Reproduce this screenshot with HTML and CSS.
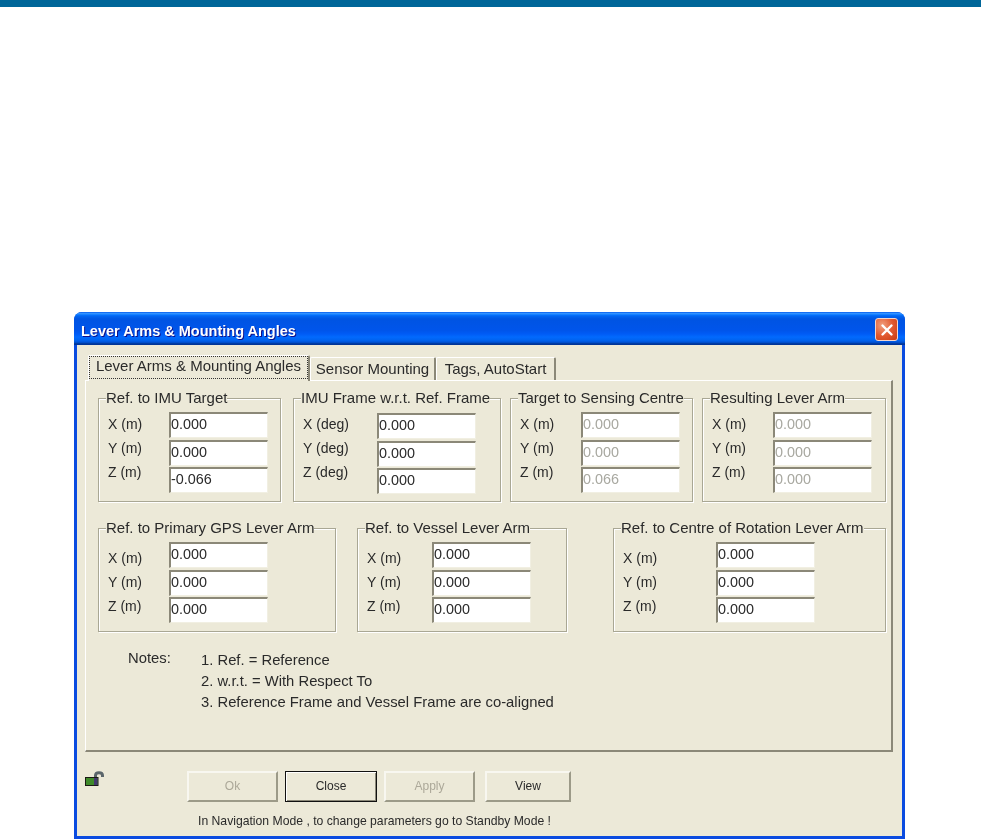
FILE: index.html
```html
<!DOCTYPE html>
<html lang="en">
<head>
<meta charset="utf-8">
<title>Lever Arms &amp; Mounting Angles</title>
<link rel="stylesheet" href="styles.css">
</head>
<body>
<div class="topbar"></div>
<div class="window">
  <div class="titlebar">
    <span class="title">Lever Arms &amp; Mounting Angles</span>
    <div class="close-x"><svg width="14" height="14" viewBox="0 0 14 14"><path d="M2.5 2.5 L11.5 11.5 M11.5 2.5 L2.5 11.5" stroke="#fff" stroke-width="2.4" stroke-linecap="round"/></svg></div>
  </div>
  <div class="client">
    <div class="tabs">
      <div class="tab active"><span class="focus">Lever Arms &amp; Mounting Angles</span></div>
      <div class="tab t2">Sensor Mounting</div>
      <div class="tab t3">Tags, AutoStart</div>
    </div>
    <div class="panel">
      <div class="row row1">
        <fieldset class="group g1">
          <legend>Ref. to IMU Target</legend>
          <div class="labels l61"><div>X (m)</div><div>Y (m)</div><div>Z (m)</div></div>
          <div class="fields"><div class="field">0.000</div><div class="field">0.000</div><div class="field">-0.066</div></div>
        </fieldset>
        <fieldset class="group g2">
          <legend>IMU Frame w.r.t. Ref. Frame</legend>
          <div class="labels l74"><div>X (deg)</div><div>Y (deg)</div><div>Z (deg)</div></div>
          <div class="fields low"><div class="field">0.000</div><div class="field">0.000</div><div class="field">0.000</div></div>
        </fieldset>
        <fieldset class="group g3">
          <legend>Target to Sensing Centre</legend>
          <div class="labels l61"><div>X (m)</div><div>Y (m)</div><div>Z (m)</div></div>
          <div class="fields off"><div class="field">0.000</div><div class="field">0.000</div><div class="field">0.066</div></div>
        </fieldset>
        <fieldset class="group g4">
          <legend>Resulting Lever Arm</legend>
          <div class="labels l61"><div>X (m)</div><div>Y (m)</div><div>Z (m)</div></div>
          <div class="fields off"><div class="field">0.000</div><div class="field">0.000</div><div class="field">0.000</div></div>
        </fieldset>
      </div>
      <div class="row row2">
        <fieldset class="group g5">
          <legend>Ref. to Primary GPS Lever Arm</legend>
          <div class="labels l61 drop"><div>X (m)</div><div>Y (m)</div><div>Z (m)</div></div>
          <div class="fields"><div class="field">0.000</div><div class="field">0.000</div><div class="field">0.000</div></div>
        </fieldset>
        <fieldset class="group g6">
          <legend>Ref. to Vessel Lever Arm</legend>
          <div class="labels l65 drop"><div>X (m)</div><div>Y (m)</div><div>Z (m)</div></div>
          <div class="fields"><div class="field">0.000</div><div class="field">0.000</div><div class="field">0.000</div></div>
        </fieldset>
        <fieldset class="group g7">
          <legend>Ref. to Centre of Rotation Lever Arm</legend>
          <div class="labels l93 drop"><div>X (m)</div><div>Y (m)</div><div>Z (m)</div></div>
          <div class="fields"><div class="field">0.000</div><div class="field">0.000</div><div class="field">0.000</div></div>
        </fieldset>
      </div>
      <div class="notes">
        <div class="notes-head">Notes:</div>
        <div class="notes-list">
          <div>1. Ref. = Reference</div>
          <div>2. w.r.t. = With Respect To</div>
          <div>3. Reference Frame and Vessel Frame are co-aligned</div>
        </div>
      </div>
    </div>
    <div class="footer">
      <div class="lock">
        <svg width="20" height="16" viewBox="0 0 20 16">
          <path d="M10.5 7 V4.5 C10.5 0.8 17.5 0.8 17.5 4.5 V6" fill="none" stroke="#5b666b" stroke-width="3"/>
          <rect x="0.5" y="6.5" width="12.5" height="8" fill="#3f8a2a" stroke="#1a1a14"/>
          <rect x="9" y="7" width="3.5" height="7" fill="#43386e"/>
        </svg>
      </div>
      <div class="actions">
        <div class="buttons">
          <div class="btn dis b1">Ok</div>
          <div class="btn def b2">Close</div>
          <div class="btn dis b3">Apply</div>
          <div class="btn b4">View</div>
        </div>
        <div class="status">In Navigation Mode , to change parameters go to Standby Mode !</div>
      </div>
    </div>
  </div>
</div>
</body>
</html>
```
FILE: styles.css
```css
html, body { margin: 0; padding: 0; background: #fff; }
body { height: 840px; overflow: hidden; font-family: "Liberation Sans", Arial, sans-serif; font-size: 14px; color: #2a2a2a; }
.topbar { height: 7px; background: #006699; }
.window {
  margin: 305px 0 0 74px; width: 831px; height: 527px; box-sizing: border-box;
  display: flex; flex-direction: column;
  background: #0a4be0; border-radius: 8px 8px 0 0; filter: blur(0.45px);
}
.titlebar {
  height: 33px; flex: none; display: flex; align-items: center; justify-content: space-between;
  box-sizing: border-box; padding: 2px 7px 0 7px; border-radius: 8px 8px 0 0;
  background: linear-gradient(180deg, #0058ee 0%, #3593ff 4%, #288eff 6%, #127dff 8%, #036ffc 10%, #0262ee 14%, #0057e5 20%, #0054e3 24%, #0055eb 56%, #005bf5 66%, #026afe 76%, #0062ef 86%, #0052d6 92%, #0040ab 94%, #003092 100%);
}
.title { color: #fff; font-weight: bold; font-size: 14.5px; padding-top: 2px; text-shadow: 1px 1px 0 #0f1089; }
.close-x {
  width: 21px; height: 21px; display: flex; align-items: center; justify-content: center;
  border: 1px solid #f4d5cb; border-radius: 3px;
  background: radial-gradient(circle at 30% 30%, #f0a080 0%, #e25a30 50%, #c93a10 100%);
}
.client {
  flex: 1; margin: 0 3px 3px 3px; background: #ece9d8; display: flex; flex-direction: column;
}
.tabs { height: 35px; box-sizing: border-box; padding: 10px 0 0 11px; display: flex; align-items: flex-end; position: relative; z-index: 1; font-size: 15px; }
.tab {
  box-sizing: border-box; height: 23px; line-height: 21px; text-align: center;
  border-top: 1px solid #fff; border-left: 1px solid #fff; border-right: 2px solid #8b8878;
  background: #ece9d8; border-radius: 2px 2px 0 0;
}
.tab.active { width: 222px; height: 26px; margin-bottom: -1px; padding: 0; }
.focus { display: block; height: 23px; line-height: 20px; outline: 1px dotted #333; outline-offset: -1px; }
.t2 { width: 126px; }
.t3 { width: 120px; }
.panel {
  box-sizing: border-box; width: 808px; height: 372px; margin-left: 8px; padding: 9px 0 0 12px;
  border-top: 1px solid #fff; border-left: 1px solid #fff;
  border-right: 2px solid #8b8878; border-bottom: 2px solid #8b8878;
}
.row { display: flex; }
.row1 { height: 112px; }
.row2 { margin-top: 18px; height: 112px; }
.group {
  box-sizing: border-box; height: 100%; margin: 0; padding: 6px 0 0 0; min-width: 0;
  display: flex; border: 1px solid #a9a794; box-shadow: 1px 1px 0 #fff, inset 1px 1px 0 #fff; border-radius: 0;
}
.group legend { padding: 0; margin-left: 7px; line-height: 16px; height: 16px; font-size: 15px; background: #ece9d8; }
.g1 { width: 183px; }
.g2 { width: 208px; margin-left: 12px; }
.g3 { width: 183px; margin-left: 9px; }
.g4 { width: 184px; margin-left: 9px; }
.g5 { width: 238px; }
.g6 { width: 210px; margin-left: 21px; }
.g7 { width: 273px; margin-left: 46px; }
.labels { flex: none; padding-left: 9px; box-sizing: content-box; }
.labels div { height: 24px; line-height: 24px; }
.drop { padding-top: 4px; }
.l61 { width: 61px; }
.l65 { width: 65px; }
.l74 { width: 74px; }
.l93 { width: 93px; }
.fields { width: 99px; flex: none; display: flex; flex-direction: column; gap: 1.5px; }
.fields.low { padding-top: 1px; }
.field {
  box-sizing: border-box; height: 26px; line-height: 20px; padding: 0; font-size: 14.4px;
  background: #fff; border-top: 2px solid #8b8878; border-left: 2px solid #8b8878;
  border-right: 1px solid #f1efe2; border-bottom: 1px solid #f1efe2;
}
.off .field { color: #a8a8a0; }
.notes { display: flex; margin-top: 18px; font-size: 14.8px; }
.notes-head { margin-left: 30px; flex: none; width: 73px; line-height: 21px; margin-top: -2px; }
.notes-list div { height: 21px; line-height: 21px; }
.footer { display: flex; flex: 1; padding-left: 8px; }
.lock { width: 102px; flex: none; padding-top: 19px; }
.actions { display: flex; flex-direction: column; padding-top: 19px; }
.buttons { display: flex; }
.btn {
  box-sizing: border-box; height: 31px; line-height: 26px; text-align: center;
  background: #ece9d8; border-top: 2px solid #f8f7f0; border-left: 2px solid #f8f7f0;
  border-right: 2px solid #9c9a88; border-bottom: 2px solid #9c9a88; font-size: 12px;
}
.b1 { width: 91px; }
.b2 { width: 92px; margin-left: 7px; }
.b3 { width: 91px; margin-left: 7px; }
.b4 { width: 86px; margin-left: 10px; }
.dis { color: #aca899; }
.def { border: 1px solid #111; box-shadow: inset 1px 1px 0 #fff, inset -1px -1px 0 #8b8878; line-height: 28px; }
.status { margin: 10px 0 0 11px; font-size: 12.2px; line-height: 18px; }
```
